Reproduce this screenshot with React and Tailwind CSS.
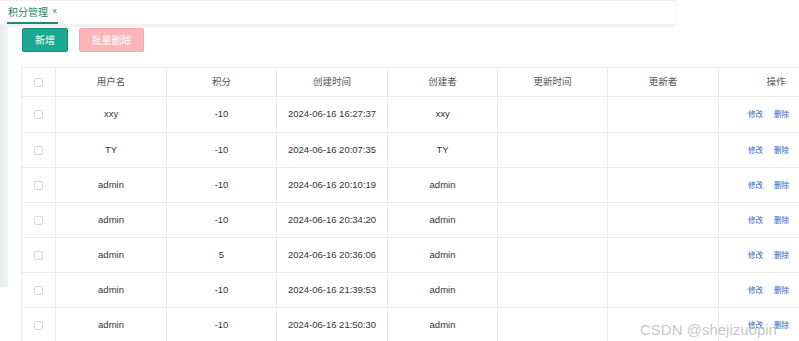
import React from 'react'

const rows = [
  { user: 'xxy', score: '-10', created: '2024-06-16 16:27:37', creator: 'xxy' },
  { user: 'TY', score: '-10', created: '2024-06-16 20:07:35', creator: 'TY' },
  { user: 'admin', score: '-10', created: '2024-06-16 20:10:19', creator: 'admin' },
  { user: 'admin', score: '-10', created: '2024-06-16 20:34:20', creator: 'admin' },
  { user: 'admin', score: '5', created: '2024-06-16 20:36:06', creator: 'admin' },
  { user: 'admin', score: '-10', created: '2024-06-16 21:39:53', creator: 'admin' },
  { user: 'admin', score: '-10', created: '2024-06-16 21:50:30', creator: 'admin' },
]

const headers = ['用户名', '积分', '创建时间', '创建者', '更新时间', '更新者', '操作']

const Checkbox = () => (
  <span className="inline-block w-[9px] h-[9px] border border-[#d4d7dd] rounded-[2px] bg-white align-middle" />
)

export default function App() {
  return (
    <div
      className="relative w-[799px] h-[341px] overflow-hidden bg-white text-[#333]"
      style={{ fontFamily: '"Liberation Sans", Arial, "Noto Sans CJK SC", sans-serif' }}
    >
      {/* tab bar */}
      <div className="w-[675px] h-[25px] bg-white border-t border-[#f2f2f2] border-b border-[#d2d2d2] shadow-[0_2px_3px_rgba(0,0,0,0.08)] flex items-end">
        <div className="ml-[7px] w-[51px] h-[24px] flex items-center gap-[4px] border-b-2 border-[#1f8a74] pl-[1px] pt-[2px]">
          <span className="text-[10px] text-[#1f7d69]">积分管理</span>
          <span className="text-[9px] text-[#1f7d69]">×</span>
        </div>
      </div>

      <div className="flex">
        {/* left shade */}
        <div className="shrink-0 w-[8px] h-[262px] bg-gradient-to-r from-[#e8eaeb] to-[#f1f2f3]" />

        <div className="shrink-0 pl-[13px] pt-[3px]">
          <div className="flex gap-[11px] ml-[1px]">
            <button className="w-[46px] h-[24px] rounded-[2px] bg-[#1aa892] border border-[#148a76] text-white text-[10px]">
              新增
            </button>
            <button className="w-[65px] h-[24px] rounded-[2px] bg-[#f9b5b7] border border-[#f5a9ac] text-white text-[10px]">
              批量删除
            </button>
          </div>

          <table className="mt-[15px] table-fixed border-collapse w-[812px] text-[9.5px]">
            <colgroup>
              <col className="w-[34px]" />
              <col className="w-[111px]" />
              <col className="w-[110px]" />
              <col className="w-[111px]" />
              <col className="w-[110px]" />
              <col className="w-[110px]" />
              <col className="w-[111px]" />
              <col className="w-[115px]" />
            </colgroup>
            <thead>
              <tr className="h-[29px]">
                <th className="border border-[#e8eaed] font-normal">
                  <Checkbox />
                </th>
                {headers.map((h) => (
                  <th key={h} className="border border-[#e8eaed] font-normal text-[#555]">
                    {h}
                  </th>
                ))}
              </tr>
            </thead>
            <tbody>
              {rows.map((r, i) => (
                <tr key={i} className={`${i === 0 ? 'h-[36px]' : 'h-[35px]'} text-center`}>
                  <td className="border border-[#e8eaed]">
                    <Checkbox />
                  </td>
                  <td className="border border-[#e8eaed]">{r.user}</td>
                  <td className="border border-[#e8eaed]">{r.score}</td>
                  <td className="border border-[#e8eaed]">{r.created}</td>
                  <td className="border border-[#e8eaed]">{r.creator}</td>
                  <td className="border border-[#e8eaed]"></td>
                  <td className="border border-[#e8eaed]"></td>
                  <td className="border border-[#e8eaed] text-left pl-[29px]">
                    <span className="text-[7.5px] text-[#2468c0]">修改</span>
                    <span className="text-[7.5px] text-[#2468c0] ml-[11px]">删除</span>
                  </td>
                </tr>
              ))}
            </tbody>
          </table>
        </div>
      </div>

      {/* watermark */}
      <div className="absolute left-[640px] top-[319px] text-[15px] text-[#b8b8b8]/80 pointer-events-none whitespace-nowrap">
        CSDN @shejizuopin
      </div>
    </div>
  )
}
